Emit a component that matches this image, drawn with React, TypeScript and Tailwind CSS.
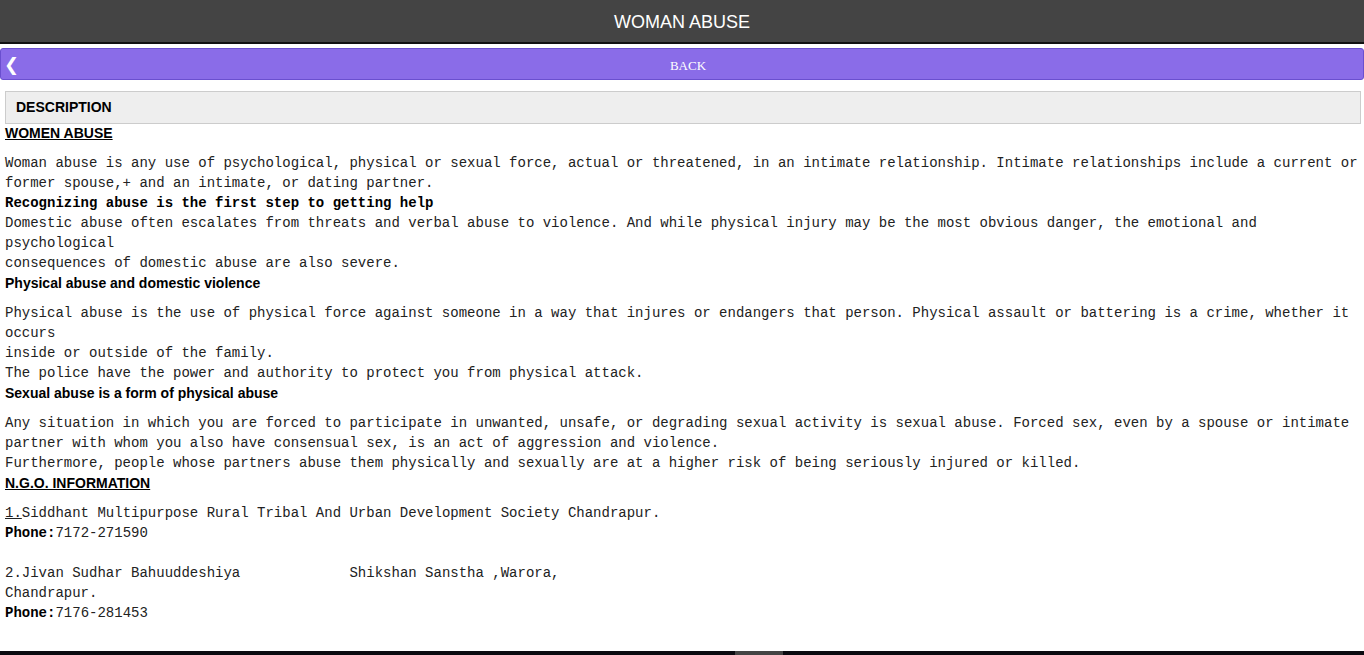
import React from 'react';

const mono = "font-['Liberation_Mono','Courier_New',monospace] text-[14px] leading-[20px] text-[#222]";
const heading = "font-['Liberation_Sans',Arial,sans-serif] text-[14px] font-bold leading-[20px] text-black mb-[10px]";

const App: React.FC = () => {
  return (
    <div className="w-[1364px] h-[655px] bg-white flex flex-col overflow-hidden">
      <div className="h-[44px] bg-[#444444] border-b-2 border-[#111] flex items-center justify-center pt-[2px] shrink-0">
        <span className="font-['Liberation_Sans',Arial,sans-serif] text-[18px] text-white">WOMAN ABUSE</span>
      </div>

      <div className="mt-[4px] h-[32px] bg-[#8a6ce8] border border-[#6a4fcf] rounded-[3px] relative flex items-center justify-center pt-[3px] pl-[12px] shrink-0">
        <span className="absolute left-[3px] top-[5px] text-white text-[18px] font-bold leading-[22px] font-['DejaVu_Sans',sans-serif]">❮</span>
        <span className="font-['Liberation_Serif','Times_New_Roman',serif] text-[13px] text-white">BACK</span>
      </div>

      <div className="mt-[11px] ml-[5px] mr-[3px] h-[33px] bg-[#eeeeee] border border-[#cccccc] flex items-center px-[10px] shrink-0">
        <span className="font-['Liberation_Sans',Arial,sans-serif] text-[14px] font-bold text-black">DESCRIPTION</span>
      </div>

      <div className="px-[5px] -mt-[1px] flex-1">
        <div className={heading}><u>WOMEN ABUSE</u></div>
        <div className={mono}>
          Woman abuse is any use of psychological, physical or sexual force, actual or threatened, in an intimate relationship. Intimate relationships include a current or former spouse,+ and an intimate, or dating partner.
          <br />
          <b className="text-black">Recognizing abuse is the first step to getting help</b>
          <br />
          Domestic abuse often escalates from threats and verbal abuse to violence. And while physical injury may be the most obvious danger, the emotional and psychological
          <br />
          consequences of domestic abuse are also severe.
        </div>

        <div className={heading}>Physical abuse and domestic violence</div>
        <div className={mono}>
          Physical abuse is the use of physical force against someone in a way that injures or endangers that person. Physical assault or battering is a crime, whether it occurs
          <br />
          inside or outside of the family.
          <br />
          The police have the power and authority to protect you from physical attack.
        </div>

        <div className={heading}>Sexual abuse is a form of physical abuse</div>
        <div className={mono}>
          Any situation in which you are forced to participate in unwanted, unsafe, or degrading sexual activity is sexual abuse. Forced sex, even by a spouse or intimate partner with whom you also have consensual sex, is an act of aggression and violence.
          <br />
          Furthermore, people whose partners abuse them physically and sexually are at a higher risk of being seriously injured or killed.
        </div>

        <div className={heading}><u>N.G.O. INFORMATION</u></div>
        <div className={mono + ' whitespace-pre-wrap'}>
          <u>1.</u>Siddhant Multipurpose Rural Tribal And Urban Development Society Chandrapur.
          {'\n'}<b className="text-black">Phone:</b>7172-271590
          {'\n\n'}2.Jivan Sudhar Bahuuddeshiya{'             '}Shikshan Sanstha ,Warora,
          {'\n'}Chandrapur.
          {'\n'}<b className="text-black">Phone:</b>7176-281453
        </div>
      </div>

      <div className="h-[4px] bg-[#0a0a10] flex shrink-0">
        <div className="w-[735px]" />
        <div className="w-[48px] bg-[#444]" />
      </div>
    </div>
  );
};

export default App;
